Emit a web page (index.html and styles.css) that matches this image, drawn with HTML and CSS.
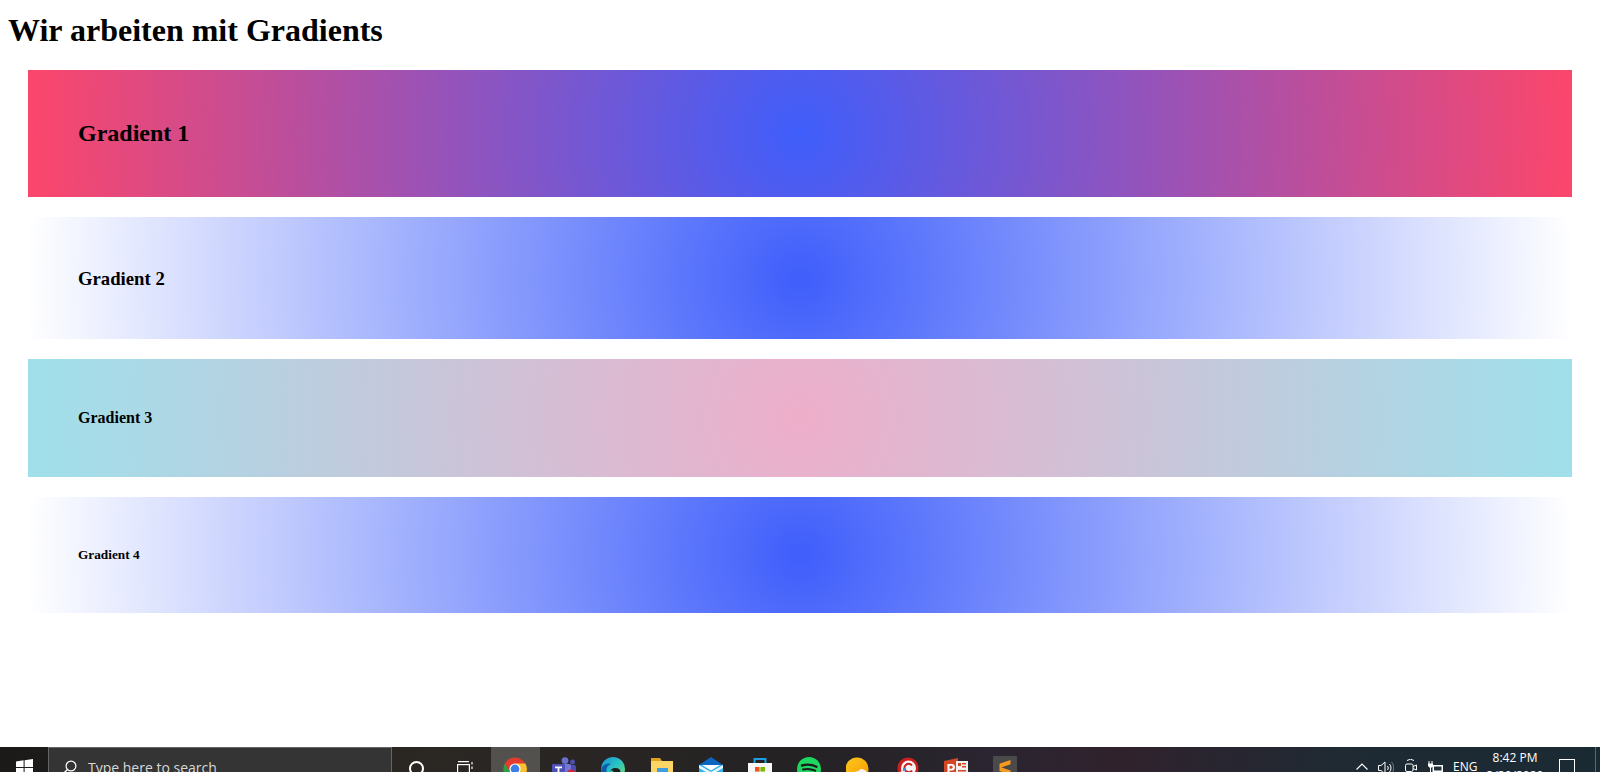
FILE: index.html
```html
<!DOCTYPE html>
<html lang="en">
<head>
    <meta charset="UTF-8">
    <meta name="viewport" content="width=device-width, initial-scale=1.0">
    <title>Gradients</title>
    <link rel="stylesheet" href="styles.css">
</head>
<body>
<div class="page">
    <main class="content">
        <h1>Wir arbeiten mit Gradients</h1>
        <div class="boxes">
            <div class="box box-one"><h2>Gradient 1</h2></div>
            <div class="box box-two"><h3>Gradient 2</h3></div>
            <div class="box box-three"><h4>Gradient 3</h4></div>
            <div class="box box-four"><h5>Gradient 4</h5></div>
        </div>
    </main>

    <!-- Windows taskbar, the bottom part is cut off by the window -->
    <footer class="taskbar">
        <div class="start">
            <svg width="17" height="17" viewBox="0 0 17 17"><path fill="#fff" d="M0 2.4 7.6 1.3V8H0zM8.6 1.2 17 0V8H8.6zM0 9h7.6v6.7L0 14.6zM8.6 9H17v8l-8.4-1.2z"/></svg>
        </div>
        <div class="search">
            <svg class="search-icon" width="16" height="16" viewBox="0 0 16 16"><circle cx="10" cy="6" r="4.9" fill="none" stroke="#fff" stroke-width="1.2"/><path d="M6.4 9.6 1 15" stroke="#fff" stroke-width="1.4"/></svg>
            <span>Type here to search</span>
        </div>
        <div class="cortana"><span class="ring"></span></div>
        <div class="taskview">
            <svg width="16" height="16" viewBox="0 0 16 16" fill="none" stroke="#fff" stroke-width="1.2"><path d="M1 .6h11M1 15.4h11"/><rect x=".6" y="3.6" width="11.8" height="8.8"/><path d="M15 1v2.4M15 5.5v2.5"/></svg>
        </div>
        <div class="tiles">
            <div class="tile tile-active">
                <svg width="24" height="24" viewBox="0 0 24 24"><circle cx="12" cy="12" r="11.5" fill="#e33b2e"/><path fill="#fbc02d" d="M12 6.5h10.4A11.5 11.5 0 0 1 12 23.5l5-9z"/><path fill="#2f9e44" d="M1.9 6.4 7 14.5a5.7 5.7 0 0 0 5 3l-0.2 6A11.5 11.5 0 0 1 1.9 6.4z"/><circle cx="12" cy="12" r="5.6" fill="#fff"/><circle cx="12" cy="12" r="4.4" fill="#3d7fe6"/></svg>
            </div>
            <div class="tile">
                <svg width="24" height="24" viewBox="0 0 24 24"><circle cx="13" cy="3.6" r="3.4" fill="#6a6fd0"/><circle cx="20.5" cy="5" r="2.5" fill="#4c50a8"/><rect x="15" y="8" width="9" height="12" rx="1.5" fill="#4c50a8"/><rect x="7" y="7" width="12" height="14" rx="1.5" fill="#7378d6"/><rect x="0" y="7" width="13" height="13" rx="1" fill="#4d52b8"/><path fill="#fff" d="M3 9.6h7v1.6H7.4V17H5.6v-5.8H3z"/><circle cx="19" cy="17" r="4.5" fill="#d5213f"/><rect x="16.5" y="15.8" width="5" height="1.6" fill="#fff"/></svg>
            </div>
            <div class="tile">
                <svg width="24" height="24" viewBox="0 0 24 24"><defs><linearGradient id="edgeGrad" x1="0" y1="0" x2="1" y2="1"><stop offset="0" stop-color="#1591d6"/><stop offset=".5" stop-color="#2cc4c4"/><stop offset="1" stop-color="#86dc5a"/></linearGradient></defs><circle cx="12" cy="12" r="12" fill="url(#edgeGrad)"/><path fill="#0c5ea8" d="M0.2 13C1 8 6 5.500 10 7c-3 1-5 4-4.500 7 .8 4 4 7 8 8-6 3-13-1-13.300-9z"/><path fill="#201e1c" d="M9.500 15c0-2.500 2-4 4.800-4 3.200 0 5.200 1.600 5.200 4 0 .7-.8 1.200-2 1.200h-3.500c-1.100 0-1.700-.3-1.700-1 0-1-.6-1.600-1.300-1.900-.8.200-1.500.9-1.500 1.700z"/></svg>
            </div>
            <div class="tile">
                <svg width="24" height="24" viewBox="0 0 24 24"><path fill="#e0a21c" d="M1 1h9l2 3h11v19H1z"/><rect x="1" y="4" width="22" height="20" fill="#fbd566"/><rect x="7" y="11" width="11" height="8" fill="#3d9fe0"/></svg>
            </div>
            <div class="tile">
                <svg width="24" height="24" viewBox="0 0 24 24"><path fill="#0a66c2" d="M12 0 24 8v4H0V8z"/><rect x="0" y="8" width="24" height="16" fill="#2fb3f0"/><path fill="#e8f6fe" d="M0 8 12 15 24 8v3L12 18 0 11z"/><path fill="#fff" d="M3 8h18l-9 5.500z"/></svg>
            </div>
            <div class="tile">
                <svg width="24" height="24" viewBox="0 0 24 24"><path fill="none" stroke="#1e9fe0" stroke-width="2" d="M6.500 8V2h11v6"/><rect x="0" y="6" width="24" height="18" fill="#f7f7f7"/><rect x="7" y="10" width="4.600" height="4.600" fill="#f25022"/><rect x="12.400" y="10" width="4.600" height="4.600" fill="#7fba00"/><rect x="7" y="15.400" width="4.600" height="4.600" fill="#00a4ef"/><rect x="12.400" y="15.400" width="4.600" height="4.600" fill="#ffb900"/></svg>
            </div>
            <div class="tile">
                <svg width="24" height="24" viewBox="0 0 24 24"><circle cx="12" cy="12" r="12" fill="#1ed760"/><g fill="none" stroke="#1b1b1b" stroke-linecap="round"><path stroke-width="2.400" d="M5 8.500c5-1.400 10-1 14.500 1.300"/><path stroke-width="2" d="M6 12.500c4.400-1.100 8.400-.7 12.200 1.200"/><path stroke-width="1.600" d="M7 16.200c3.500-.8 6.700-.5 9.700 1"/></g></svg>
            </div>
            <div class="tile">
                <svg width="24" height="24" viewBox="0 0 24 24"><defs><linearGradient id="sunGrad" x1="0" y1="0" x2="1" y2="1"><stop offset="0" stop-color="#ffc81e"/><stop offset="1" stop-color="#f59a00"/></linearGradient></defs><circle cx="11" cy="12" r="11.500" fill="url(#sunGrad)"/><path fill="#f4f4f4" d="M10 23a4 4 0 0 1 2-8.500 5 5 0 0 1 9 1 3.500 3.500 0 0 1 1 7.500z"/></svg>
            </div>
            <div class="tile">
                <svg width="24" height="24" viewBox="0 0 24 24"><circle cx="13" cy="11" r="10.500" fill="#c9201f"/><circle cx="13.500" cy="11" r="7.500" fill="#f4f4f4"/><path fill="none" stroke="#c9201f" stroke-width="2" d="M17 8.500a4.200 4.200 0 1 0 0 5"/><path fill="#e8e4dc" d="M0 22 7 13l3 3-5 7z"/><path fill="#3d8fd8" d="M8 11h3v3H8z"/></svg>
            </div>
            <div class="tile">
                <svg width="24" height="24" viewBox="0 0 24 24"><path fill="#d24726" d="M0 4 14 1v22L0 20z"/><rect x="12" y="4" width="12" height="17" fill="#f0f0ee"/><path fill="#d24726" d="M14 6h3v3h-3zM18 6h4v1.500h-4zM18 9h4v1.500h-4zM14 13h8v1.500h-8zM14 16h8v1.500h-8z"/><path fill="#fff" d="M3.500 7h4.200a3 3 0 0 1 0 6.400H5.500V18h-2zM5.500 8.800v2.900h1.800a1.400 1.400 0 0 0 0-2.900z"/></svg>
            </div>
            <div class="tile tile-sublime">
                <svg width="24" height="24" viewBox="0 0 24 24"><rect width="24" height="24" rx="1" fill="#4a4a4a"/><path fill="#f79a1e" d="M17.500 4v4.300L6.500 12V7.700zM6.500 10.800 17.500 14.500v4.300L6.500 15z"/></svg>
            </div>
        </div>
        <div class="tray">
            <svg class="tray-chevron" width="12" height="7" viewBox="0 0 12 7"><path d="M.5 6.500 6 1l5.500 5.500" fill="none" stroke="#fff" stroke-width="1.100"/></svg>
            <svg class="tray-speaker" width="16" height="14" viewBox="0 0 16 14" fill="none" stroke="#fff" stroke-width="1"><path d="M.5 4.500h2.500L7 1v12L3 9.500H.5z"/><path d="M9.500 5a3 3 0 0 1 0 4M11.500 3a6 6 0 0 1 0 8"/><path d="M13.500 1a9 9 0 0 1 0 12" stroke="#777"/></svg>
            <svg class="tray-meet" width="12" height="15" viewBox="0 0 12 15" fill="none" stroke="#fff" stroke-width="1"><path d="M2 1.500A6 6 0 0 1 9 1.500"/><rect x=".5" y="5" width="7.500" height="7.500" rx="1.500"/><path d="M8 7.500 11.500 6v5L8 9.700"/></svg>
            <svg class="tray-battery" width="16" height="15" viewBox="0 0 16 15"><path d="M2 0v2.500M5 0v2.500M1 2.500h5V4h10v7H5.500V5.500L4 7H3L1 5z" fill="#fff"/><path d="M2 0v3M5 0v3M3.500 7v4" fill="none" stroke="#fff" stroke-width="1"/><rect x="7" y="5.500" width="7.500" height="4" fill="#24303a"/></svg>
            <span class="lang">ENG</span>
            <div class="clock">
                <span>8:42 PM</span>
                <span>3/20/2020</span>
            </div>
            <span class="action"></span>
            <span class="show-desktop"></span>
        </div>
    </footer>
</div>
</body>
</html>
```
FILE: styles.css
```css
html, body {
    margin: 0;
    padding: 0;
    background-color: #fff;
}
.page {
    display: flex;
    flex-direction: column;
    height: 772px;
    overflow: hidden;
}
.content {
    flex: 1;
    padding: 8px;
    font-family: "Liberation Serif", "Times New Roman", serif;
    color: #000;
}
h1 {
    margin: 4px 0 21px;
    font-size: 32px;
    line-height: 37px;
}
h2, h3, h4, h5 {
    margin: 0;
}
h2 {
    font-size: 24px;
}
h3 {
    font-size: 18.72px;
}
h4 {
    font-size: 16px;
}
h5 {
    font-size: 13.28px;
}
.boxes {
    display: flex;
    flex-direction: column;
    gap: 20px;
    padding: 0 20px;
}
.box {
    display: flex;
    align-items: center;
    padding: 0 50px;
}
.box-one {
    height: 127px;
    background: radial-gradient(circle, #3f5efb 0%, #fc466b 100%);
}
.box-two {
    height: 122px;
    padding-top: 1px;
    box-sizing: border-box;
    background: radial-gradient(circle, #3f5efb 0%, #fff 100%);
}
.box-three {
    height: 118px;
    background: radial-gradient(circle, #eeaeca 0%, #9fe0eb 100%);
}
.box-four {
    height: 116px;
    background: radial-gradient(circle, #3f5efb 0%, #fff 100%);
}

/* taskbar */
.taskbar {
    display: flex;
    flex-shrink: 0;
    height: 25px;
    overflow: hidden;
    background: linear-gradient(90deg, #1b1a18 0%, #2b2723 27%, #252224 50%, #2a2530 62%, #30222d 70%, #1f2a33 84%, #1a2a33 100%);
    color: #fff;
    font-family: "Open Sans", "Noto Sans", sans-serif;
}
.start {
    width: 48px;
    height: 40px;
    flex-shrink: 0;
    padding: 12px 0 0 16px;
    box-sizing: border-box;
}
.search {
    display: flex;
    gap: 11px;
    width: 344px;
    height: 40px;
    flex-shrink: 0;
    box-sizing: border-box;
    padding: 12px 0 0 12px;
    background-color: #343434;
    border: 1px solid #666;
    border-bottom: none;
    font-size: 14px;
    line-height: 24px;
    color: #d8d8d8;
}
.search span {
    margin-top: -4px;
}
.cortana {
    width: 48px;
    flex-shrink: 0;
    padding: 14px 0 0 17px;
    box-sizing: border-box;
}
.ring {
    display: block;
    width: 15px;
    height: 15px;
    border: 2px solid #fff;
    border-radius: 50%;
    box-sizing: border-box;
}
.taskview {
    width: 51px;
    flex-shrink: 0;
    padding: 13px 0 0 17px;
    box-sizing: border-box;
}
.tiles {
    display: flex;
    flex-shrink: 0;
}
.tile {
    width: 49px;
    height: 40px;
    box-sizing: border-box;
    padding: 10px 0 0 12px;
}
.tile-active {
    background-color: #53514d;
}
.tile-sublime {
    padding-top: 9px;
}
.tray {
    display: flex;
    align-items: flex-start;
    margin-left: auto;
    height: 40px;
    font-size: 12px;
}
.tray-chevron {
    margin: 16px 10px 0 0;
}
.tray-speaker {
    margin: 14px 11px 0 0;
}
.tray-meet {
    margin: 12px 10px 0 0;
}
.tray-battery {
    margin: 14px 10px 0 0;
}
.lang {
    width: 31px;
    margin-top: 12px;
    line-height: 16px;
}
.clock {
    display: flex;
    flex-direction: column;
    align-items: center;
    width: 62px;
    margin-top: 2px;
    line-height: 18px;
}
.action {
    width: 16px;
    height: 15px;
    margin: 12px 20px 0 13px;
    border: 1px solid #fff;
    box-sizing: border-box;
}
.show-desktop {
    width: 1px;
    height: 40px;
    margin-right: 4px;
    background-color: #5b6a72;
}
```
